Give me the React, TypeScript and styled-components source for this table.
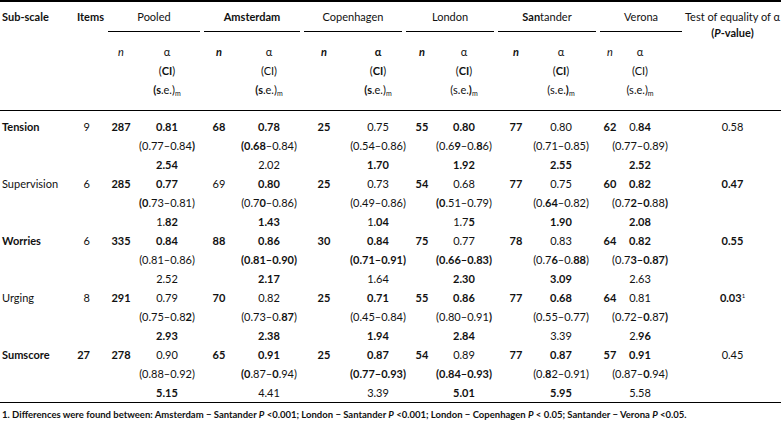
import React from "react";
import styled, { createGlobalStyle } from "styled-components";

const GlobalStyle = createGlobalStyle`
  html, body {
    margin: 0;
    padding: 0;
    background: #fff;
  }
  body {
    font-family: Lato, "Noto Sans", sans-serif;
    color: #111;
  }
`;

// column tracks: sub-scale, items, 6 x (n, alpha), test
const TRACKS =
  "66px 40px 30px 66px 34px 66px 44px 58px 36px 56px 40px 62px 24px 62px 97px";

type Site = {
  name: string;
  nBold: boolean;
  alphaBold: boolean;
  ci: string;
  se: string;
  nudge: number;
};

const sites: Site[] = [
  { name: "Pooled", nBold: false, alphaBold: false, ci: "(*CI*)", se: "*(s*.e.)", nudge: -2 },
  { name: "*Amsterdam*", nBold: true, alphaBold: false, ci: "(CI)", se: "*(s*.e.)", nudge: 0 },
  { name: "Copenhagen", nBold: true, alphaBold: true, ci: "(*CI*)", se: "*(s*.e.)", nudge: 3 },
  { name: "London", nBold: true, alphaBold: false, ci: "(*CI*)", se: "(s.e.*)*", nudge: -4 },
  { name: "*San*tander", nBold: true, alphaBold: false, ci: "(*CI*)", se: "(s.e.*)*", nudge: -6 },
  { name: "Verona", nBold: false, alphaBold: false, ci: "(CI)", se: "(s.e.)", nudge: -13 }
];

type Cell = { n: string; a: string; ci: string; se: string };
type Scale = { name: string; bold: boolean; items: string; cells: Cell[]; test: string; note?: boolean };

const scales: Scale[] = [
  {
    name: "Tension",
    bold: true,
    items: "9",
    test: "0.58",
    cells: [
      { n: "*287*", a: "*0.81*", ci: "(0.77–0.84*)*", se: "*2.54*" },
      { n: "*68*", a: "*0.78*", ci: "*(0.68*–0.84)", se: "2.02" },
      { n: "*25*", a: "0.75", ci: "(0.54–0.86)", se: "*1.70*" },
      { n: "*55*", a: "*0.80*", ci: "(0.6*9*–0.*8*6)", se: "*1.92*" },
      { n: "*77*", a: "0.80", ci: "(0.71–0.85)", se: "*2.55*" },
      { n: "*62*", a: "0.*84*", ci: "(0.77–0.89)", se: "*2.52*" }
    ]
  },
  {
    name: "Supervision",
    bold: false,
    items: "6",
    test: "*0.47*",
    cells: [
      { n: "*285*", a: "*0.77*", ci: "*(0*.73–0.81)", se: "1.*82*" },
      { n: "69", a: "*0.80*", ci: "(0.7*0*–0.86)", se: "*1.43*" },
      { n: "*25*", a: "0.73", ci: "(0.49–0.86)", se: "1.*04*" },
      { n: "*54*", a: "0.68", ci: "*(0*.51–0.79)", se: "1.7*5*" },
      { n: "*77*", a: "0.75", ci: "(0.*64*–0.82)", se: "*1.90*" },
      { n: "*60*", a: "*0.82*", ci: "(0.7*2–0*.88*)*", se: "*2.08*" }
    ]
  },
  {
    name: "Worries",
    bold: true,
    items: "6",
    test: "*0.55*",
    cells: [
      { n: "*335*", a: "*0.84*", ci: "(0.81–0.86)", se: "2.52" },
      { n: "*88*", a: "*0.86*", ci: "*(0.81–0.90)*", se: "*2.17*" },
      { n: "*30*", a: "*0.84*", ci: "*(0.71–0.91)*", se: "1.64" },
      { n: "*75*", a: "0.77", ci: "*(0.66–0.83)*", se: "*2.30*" },
      { n: "*78*", a: "0.83", ci: "(0.7*6*–0.*88*)", se: "*3.09*" },
      { n: "*64*", a: "*0.82*", ci: "(0.7*3–0.87)*", se: "2.63" }
    ]
  },
  {
    name: "Urging",
    bold: false,
    items: "8",
    test: "*0.03*",
    note: true,
    cells: [
      { n: "*291*", a: "0.79", ci: "(0.75–0.8*2*)", se: "*2.93*" },
      { n: "*70*", a: "0.82", ci: "(0.73–0.*87*)", se: "*2.38*" },
      { n: "*25*", a: "*0.71*", ci: "(0.45–0.84)", se: "*1.94*" },
      { n: "*55*", a: "*0.86*", ci: "(0.80–0.91*)*", se: "*2.84*" },
      { n: "*77*", a: "*0.68*", ci: "(0.55–0.77)", se: "3.39" },
      { n: "*64*", a: "0.81", ci: "(0.72–*0*.87*)*", se: "2.*96*" }
    ]
  },
  {
    name: "Sumscore",
    bold: true,
    items: "*27*",
    test: "0.45",
    cells: [
      { n: "*278*", a: "0.90", ci: "(0.88–0.92)", se: "*5.15*" },
      { n: "*65*", a: "*0.91*", ci: "*(0*.87–*0*.94)", se: "4.41" },
      { n: "*25*", a: "*0.87*", ci: "*(0.77–0.93)*", se: "3.39" },
      { n: "*54*", a: "0.89", ci: "*(0.84–0.93)*", se: "*5.01*" },
      { n: "*77*", a: "*0.87*", ci: "(0.*8*2–0.91)", se: "*5.95*" },
      { n: "*57*", a: "*0.91*", ci: "(0.87–*0*.94)", se: "5.58" }
    ]
  }
];

// "*" toggles bold on and off
const Rich = ({ text }: { text: string }) => (
  <>
    {text.split("*").map((part, i) =>
      i % 2 ? <b key={i}>{part}</b> : <React.Fragment key={i}>{part}</React.Fragment>
    )}
  </>
);

export default function App() {
  return (
    <Page>
      <GlobalStyle />
      <Header>
        <RowHead>
          <b>Sub-scale</b>
        </RowHead>
        <ItemsHead>
          <b>Items</b>
        </ItemsHead>
        {sites.map((s) => (
          <GroupHead key={s.name}>
            <GroupTitle>
              <Rich text={s.name} />
            </GroupTitle>
          </GroupHead>
        ))}
        <TestHead>
          Test of equality of α
          <br />
          <b>
            (<i>P</i>-value)
          </b>
        </TestHead>
        {sites.map((s) => (
          <React.Fragment key={s.name}>
            <NHead $bold={s.nBold}>n</NHead>
            <Stack $nudge={s.nudge}>
              <Line>{s.alphaBold ? <b>α</b> : "α"}</Line>
              <Line>
                <Rich text={s.ci} />
              </Line>
              <Line>
                <Rich text={s.se} />
                <Sub>m</Sub>
              </Line>
            </Stack>
          </React.Fragment>
        ))}
      </Header>
      <Body>
        {scales.map((sc) => (
          <React.Fragment key={sc.name}>
            <NameCell $bold={sc.bold}>{sc.name}</NameCell>
            <ItemsCell>
              <Rich text={sc.items} />
            </ItemsCell>
            {sc.cells.map((c, i) => (
              <React.Fragment key={i}>
                <NCell>
                  <Rich text={c.n} />
                </NCell>
                <Stack $nudge={sites[i].nudge}>
                  <Line>
                    <Rich text={c.a} />
                  </Line>
                  <Line>
                    <Rich text={c.ci} />
                  </Line>
                  <Line>
                    <Rich text={c.se} />
                  </Line>
                </Stack>
              </React.Fragment>
            ))}
            <TestCell>
              <Rich text={sc.test} />
              {sc.note && <Sup>1</Sup>}
            </TestCell>
          </React.Fragment>
        ))}
      </Body>
      <Footnote>
        1. Differences were found between: Amsterdam − Santander <i>P</i> &lt;0.001; London −
        Santander <i>P</i> &lt;0.001; London − Copenhagen <i>P</i> &lt; 0.05; Santander − Verona{" "}
        <i>P</i> &lt;0.05.
      </Footnote>
    </Page>
  );
}

const Page = styled.div`
  width: 781px;
  font-size: 11px;
  background: #fff;
`;

const Header = styled.div`
  display: grid;
  grid-template-columns: ${TRACKS};
  border-top: 2px solid #000;
  border-bottom: 1px solid #000;
`;

const RowHead = styled.div`
  grid-column: 1;
  grid-row: 1 / span 2;
  padding: 7px 0 0 2px;
  line-height: 16px;
  white-space: nowrap;
`;

const ItemsHead = styled.div`
  grid-column: 2;
  grid-row: 1 / span 2;
  padding: 7px 2px 0 0;
  line-height: 16px;
  text-align: right;
`;

const GroupHead = styled.div`
  grid-row: 1;
  grid-column: span 2;
  padding: 7px 2px 0;
`;

const GroupTitle = styled.div`
  line-height: 16px;
  padding-bottom: 6px;
  text-align: center;
  white-space: nowrap;
  border-bottom: 1px solid #000;
`;

const TestHead = styled.div`
  grid-column: 15;
  grid-row: 1 / span 2;
  padding-top: 7px;
  line-height: 16px;
  text-align: center;
  white-space: nowrap;
`;

const NHead = styled.div<{ $bold: boolean }>`
  padding: 9.5px 0 0;
  line-height: 19px;
  text-align: center;
  font-style: italic;
  font-weight: ${(p) => (p.$bold ? 700 : 400)};
`;

const Stack = styled.div<{ $nudge: number }>`
  display: flex;
  flex-direction: column;
  align-items: center;
  transform: translateX(${(p) => p.$nudge}px);
  ${Header} & {
    padding: 9.5px 0 11.5px;
  }
`;

const Line = styled.div`
  height: 19px;
  line-height: 19px;
  white-space: nowrap;
`;

const Sub = styled.sub`
  font-size: 7px;
  line-height: 0;
  vertical-align: -2px;
`;

const Sup = styled.sup`
  font-size: 6px;
  line-height: 0;
  vertical-align: 4px;
`;

const Body = styled.div`
  display: grid;
  grid-template-columns: ${TRACKS};
  padding-top: 6px;
  border-bottom: 1px solid #000;
  align-items: start;
`;

const NameCell = styled.div<{ $bold: boolean }>`
  padding-left: 2px;
  line-height: 19px;
  white-space: nowrap;
  font-weight: ${(p) => (p.$bold ? 700 : 400)};
`;

const ItemsCell = styled.div`
  padding-right: 16px;
  line-height: 19px;
  text-align: right;
`;

const NCell = styled.div`
  line-height: 19px;
  text-align: center;
  white-space: nowrap;
`;

const TestCell = styled.div`
  line-height: 19px;
  text-align: center;
  white-space: nowrap;
`;

const Footnote = styled.div`
  padding: 5px 0 0 2px;
  font-size: 9.5px;
  line-height: 14px;
  font-weight: 700;
  white-space: nowrap;
`;
